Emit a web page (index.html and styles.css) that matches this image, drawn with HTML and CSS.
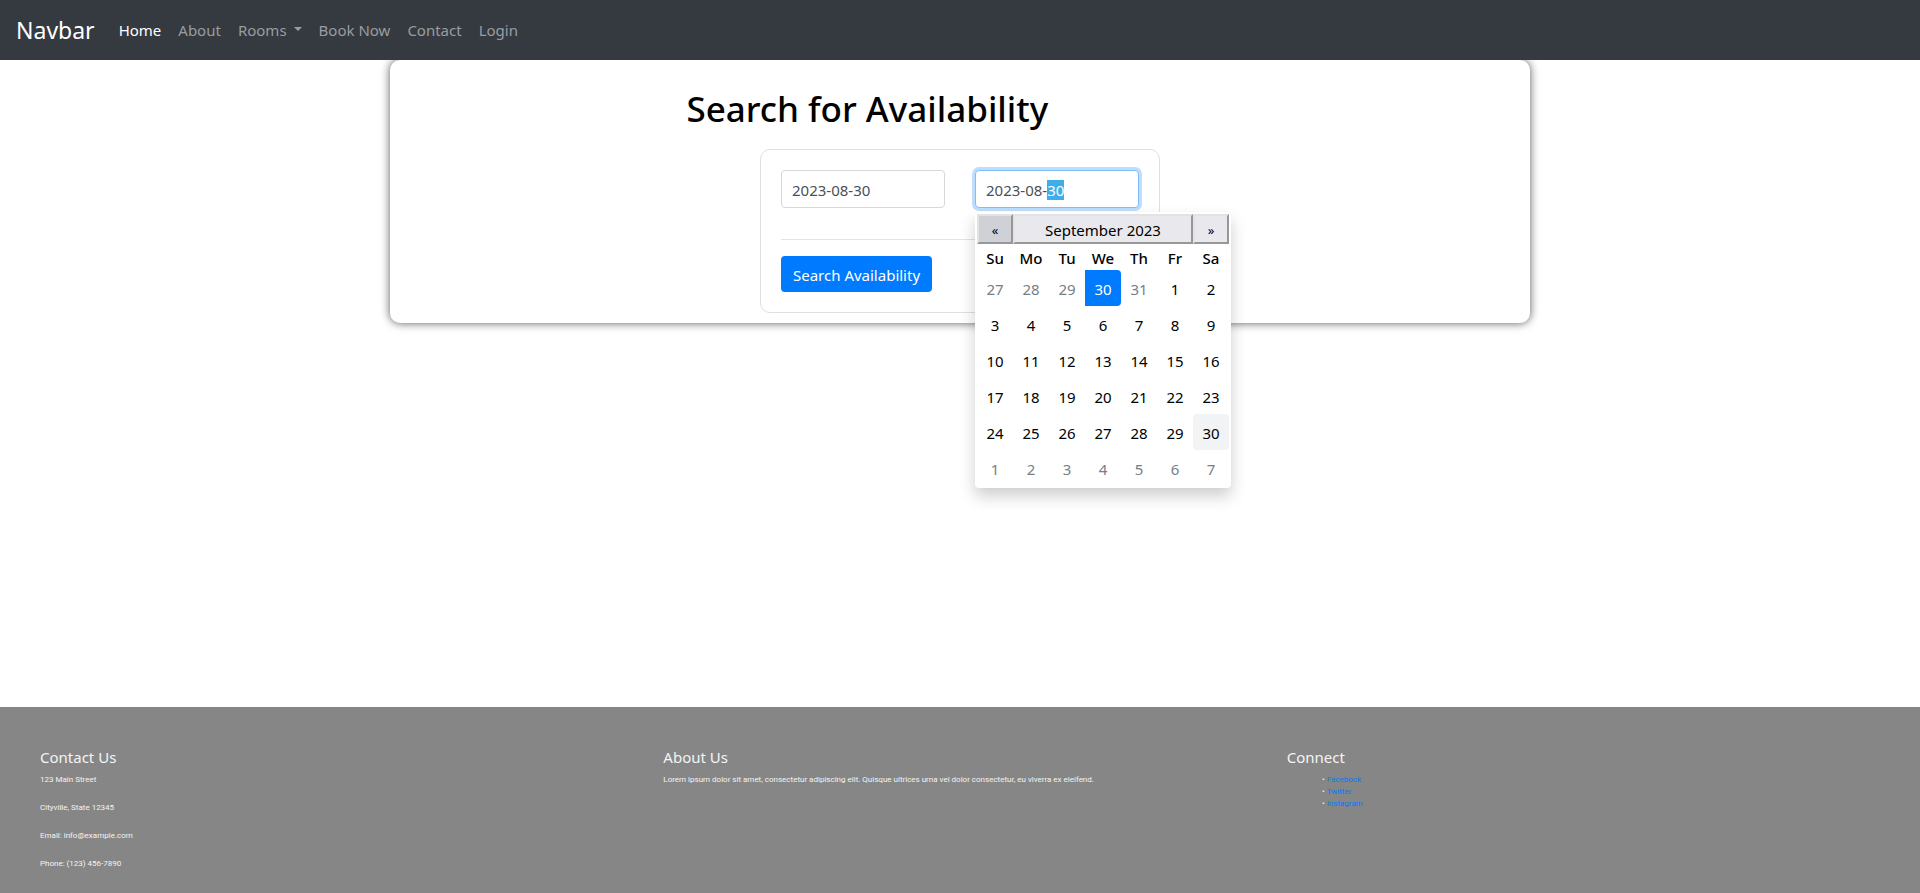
FILE: index.html
```
<!DOCTYPE html>
<html lang="en">
<head>
<meta charset="utf-8">
<title>Search for Availability</title>
<link rel="stylesheet" href="styles.css">
</head>
<body>
<nav class="navbar">
  <a class="navbar-brand" href="#">Navbar</a>
  <ul class="navbar-nav">
    <li><a class="nav-link active" href="#">Home</a></li>
    <li><a class="nav-link" href="#">About</a></li>
    <li><a class="nav-link dropdown-toggle" href="#">Rooms</a></li>
    <li><a class="nav-link" href="#">Book Now</a></li>
    <li><a class="nav-link" href="#">Contact</a></li>
    <li><a class="nav-link" href="#">Login</a></li>
  </ul>
</nav>

<main class="container">
  <h1 class="title">Search for Availability</h1>
  <form class="card">
    <div class="dates">
      <input class="form-control" type="text" aria-label="Arrival" value="2023-08-30">
      <div class="date-field">
        <input class="form-control focused" id="end" type="text" aria-label="Departure" value="2023-08-30">
        <div class="datepicker">
          <table>
            <thead>
              <tr class="switcher">
                <th><button type="button" class="hover">«</button></th>
                <th colspan="5"><button type="button" class="month">September 2023</button></th>
                <th><button type="button">»</button></th>
              </tr>
              <tr class="dow"><th>Su</th><th>Mo</th><th>Tu</th><th>We</th><th>Th</th><th>Fr</th><th>Sa</th></tr>
            </thead>
            <tbody>
              <tr><td class="muted">27</td><td class="muted">28</td><td class="muted">29</td><td class="selected">30</td><td class="muted">31</td><td>1</td><td>2</td></tr>
              <tr><td>3</td><td>4</td><td>5</td><td>6</td><td>7</td><td>8</td><td>9</td></tr>
              <tr><td>10</td><td>11</td><td>12</td><td>13</td><td>14</td><td>15</td><td>16</td></tr>
              <tr><td>17</td><td>18</td><td>19</td><td>20</td><td>21</td><td>22</td><td>23</td></tr>
              <tr><td>24</td><td>25</td><td>26</td><td>27</td><td>28</td><td>29</td><td class="current">30</td></tr>
              <tr><td class="muted">1</td><td class="muted">2</td><td class="muted">3</td><td class="muted">4</td><td class="muted">5</td><td class="muted">6</td><td class="muted">7</td></tr>
            </tbody>
          </table>
        </div>
      </div>
    </div>
    <hr class="divider">
    <button class="btn" type="submit">Search Availability</button>
  </form>
</main>

<footer class="footer">
  <section class="col">
    <h5>Contact Us</h5>
    <p>123 Main Street</p>
    <p>Cityville, State 12345</p>
    <p>Email: info@example.com</p>
    <p>Phone: (123) 456-7890</p>
  </section>
  <section class="col">
    <h5>About Us</h5>
    <p>Lorem ipsum dolor sit amet, consectetur adipiscing elit. Quisque ultrices urna vel dolor consectetur, eu viverra ex eleifend.</p>
  </section>
  <section class="col">
    <h5>Connect</h5>
    <ul>
      <li><a href="#">Facebook</a></li>
      <li><a href="#">Twitter</a></li>
      <li><a href="#">Instagram</a></li>
    </ul>
  </section>
</footer>
<script src="script.js"></script>
</body>
</html>
```
FILE: styles.css
```
* { box-sizing: border-box; }

body {
  display: flex;
  flex-direction: column;
  min-height: 100vh;
  margin: 0;
  background: #fff;
  color: #000;
  font-family: "Noto Sans", "Open Sans", sans-serif;
  font-size: 15px;
  line-height: 24px;
}

a { text-decoration: none; }

input, button { font: inherit; }

.navbar {
  position: relative;
  z-index: 1;
  display: flex;
  align-items: center;
  gap: 16px;
  padding: 8px 16px;
  min-height: 60px;
  background: #343a40;
}

.navbar-brand {
  color: #fff;
  font-size: 23px;
  line-height: 30px;
}

.navbar-nav {
  display: flex;
  gap: 1px;
  margin: 0;
  padding: 0;
  list-style: none;
}

.nav-link {
  display: flex;
  align-items: center;
  padding: 8px;
  color: #999da0;
}

.nav-link.active { color: #fff; }

.dropdown-toggle::after {
  content: "";
  margin: 0 0 2px 7px;
  border: 4px solid transparent;
  border-top-color: currentColor;
  border-bottom: 0;
}

.container {
  width: 100%;
  max-width: 1140px;
  margin: 0 auto;
  padding: 25px 0 10px;
  border-radius: 10px;
  box-shadow: 0 0 10px rgba(0, 0, 0, 0.65);
}

.title {
  margin: 0 0 16px 26%;
  font-size: 35px;
  font-weight: 500;
  line-height: 48px;
}

.card {
  width: 400px;
  margin: 0 auto;
  padding: 20px;
  border: 1px solid #dfdfdf;
  border-radius: 10px;
}

.dates {
  display: grid;
  grid-template-columns: 1fr 1fr;
  gap: 30px;
}

.date-field { position: relative; }

.form-control {
  display: block;
  width: 100%;
  height: 38px;
  padding: 7px 10px 5px;
  border: 1px solid #d5d8db;
  border-radius: 4px;
  outline: 0;
  background: #fff;
  color: #495057;
}

.form-control.focused {
  border-color: #80bdff;
  box-shadow: 0 0 0 3px #bfdeff;
}

.form-control::selection {
  background: #3daee9;
  color: #fcfcfc;
}

.datepicker {
  position: absolute;
  top: 42px;
  left: 0;
  z-index: 10;
  padding: 2px;
  border-radius: 4px;
  background: #fff;
  box-shadow: 0 8px 16px rgba(0, 0, 0, 0.2);
}

.datepicker table {
  width: 252px;
  border-collapse: collapse;
  table-layout: fixed;
  text-align: center;
}

.datepicker th,
.datepicker td {
  padding: 0;
  border-radius: 4px;
}

.datepicker td {
  height: 36px;
  padding-top: 2px;
}

.switcher button {
  display: block;
  width: 100%;
  height: 30px;
  padding: 2px 0 0;
  border: 2px solid;
  border-color: #e3e3e3 #979797 #979797 #e3e3e3;
  background: #e9e9ed;
  color: #000;
  font-size: 13px;
  font-weight: 400;
}

.switcher .hover { background: #d0d0d7; }

.switcher .month { font-size: 15px; }

.datepicker .dow th {
  height: 26px;
  padding-top: 2px;
  font-weight: 500;
}

.datepicker .muted { color: #777e85; }

.datepicker .selected {
  border-radius: 0 4px 4px 0;
  background: #007bff;
  color: #fff;
}

.datepicker .current { background: #f1f3f5; }

.divider {
  margin: 31px 0 16px;
  border: 0;
  border-top: 1px solid #e3e3e3;
}

.btn {
  display: block;
  padding: 7px 12px 5px;
  border: 0;
  border-radius: 4px;
  background: #007bff;
  color: #fff;
}

.footer {
  display: grid;
  grid-template-columns: repeat(3, 1fr);
  margin-top: auto;
  padding: 41px 25px 7px;
  background: #868686;
  color: #f4f4f4;
  font-family: Roboto, "Noto Sans", sans-serif;
  font-size: 8px;
  line-height: 12px;
}

.col { padding: 0 15px; }

.col h5 {
  margin: 0 0 7px;
  font-family: "Noto Sans", "Open Sans", sans-serif;
  font-size: 15px;
  font-weight: 400;
  line-height: 19px;
}

.col p { margin: 0 0 16px; }

.col ul {
  margin: 0;
  padding-left: 40px;
}

.col li::marker { content: "•\00a0"; }

.col a { color: #007bff; }
```
FILE: script.js
```
const end = document.getElementById("end");
end.focus();
end.setSelectionRange(8, 10);
```
